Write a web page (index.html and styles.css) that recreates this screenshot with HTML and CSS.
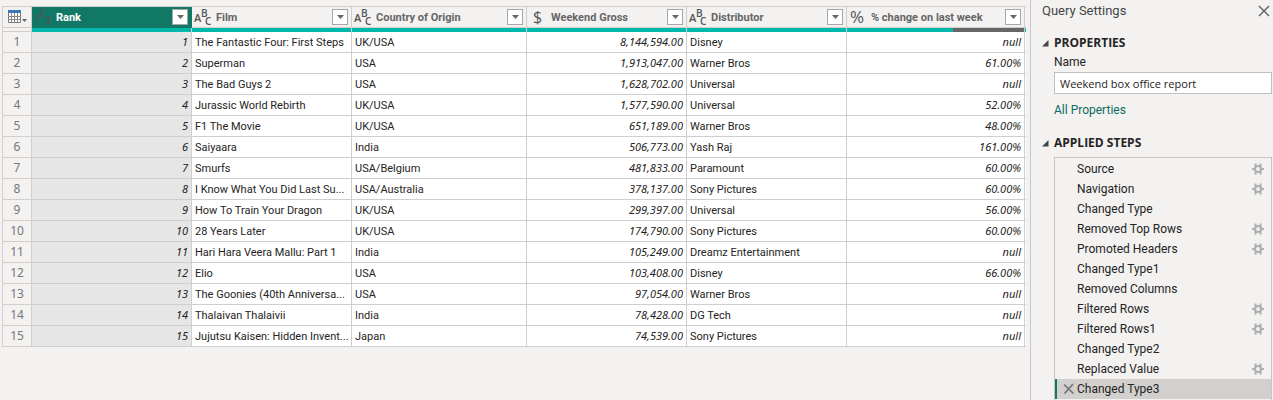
FILE: index.html
```html
<!DOCTYPE html>
<html lang="en">
<head>
<meta charset="utf-8">
<title>Weekend box office report</title>
<link rel="stylesheet" href="styles.css">
</head>
<body>
<svg class="defs" aria-hidden="true">
  <symbol id="arrow" viewBox="0 0 7 4"><path d="M0 0h7L3.5 4z" fill="#666"/></symbol>
  <symbol id="gear" viewBox="0 0 12 12"><g fill="none" stroke="#b0b0b0"><circle cx="6" cy="6" r="3" stroke-width="2.200"/><path stroke-width="2" d="M0 6h3M9 6h3M3.500 .5V4M8.500 .5V4M3.500 8v3.500M8.500 8v3.500"/></g></symbol>
</svg>
<div class="app">
<main class="preview">
<table class="grid">
<colgroup><col class="w-num"><col class="w-std"><col class="w-std"><col class="w-wide"><col class="w-std"><col class="w-std"><col class="w-pct"><col class="w-end"></colgroup>
<thead>
<tr class="heads">
<td class="corner"><button class="table-menu" aria-label="Table options"><svg width="21" height="14" viewBox="0 0 21 14"><path d="M.5.5h12v12H.5z" fill="#fff" stroke="#777"/><path d="M0 0h13v3H0z" fill="#3b78b5"/><path d="M3.500 3v10M6.500 3v10M9.500 3v10M0 6.500h13M0 9.500h13" stroke="#888" fill="none"/><path d="M14 9h5l-2.500 3z" fill="#666"/></svg></button></td>
<th class="selected" scope="col"><div class="head"><svg class="type heavy"><text x="0" y="14" font-size="11">1</text><text x="5" y="9" font-size="10">2</text><text x="11" y="16" font-size="10">3</text></svg><span class="label">Rank</span><button class="drop" aria-label="Filter Rank"><svg><use href="#arrow"/></svg></button></div></th>
<th scope="col"><div class="head"><svg class="type heavy"><text x="0" y="14" font-size="11">A</text><text x="7" y="9" font-size="10">B</text><text x="11" y="17" font-size="10">C</text></svg><span class="label">Film</span><button class="drop" aria-label="Filter Film"><svg><use href="#arrow"/></svg></button></div></th>
<th scope="col"><div class="head"><svg class="type heavy"><text x="0" y="14" font-size="11">A</text><text x="7" y="9" font-size="10">B</text><text x="11" y="17" font-size="10">C</text></svg><span class="label">Country of Origin</span><button class="drop" aria-label="Filter Country of Origin"><svg><use href="#arrow"/></svg></button></div></th>
<th scope="col"><div class="head"><svg class="type"><text x="4" y="15" font-size="16">$</text></svg><span class="label">Weekend Gross</span><button class="drop" aria-label="Filter Weekend Gross"><svg><use href="#arrow"/></svg></button></div></th>
<th scope="col"><div class="head"><svg class="type heavy"><text x="0" y="14" font-size="11">A</text><text x="7" y="9" font-size="10">B</text><text x="11" y="17" font-size="10">C</text></svg><span class="label">Distributor</span><button class="drop" aria-label="Filter Distributor"><svg><use href="#arrow"/></svg></button></div></th>
<th scope="col"><div class="head"><svg class="type"><text x="1" y="15" font-size="17">%</text></svg><span class="label">% change on last week</span><button class="drop" aria-label="Filter % change on last week"><svg><use href="#arrow"/></svg></button></div></th>
<td class="end"></td>
</tr>
<tr class="quality"><td class="corner"></td><td></td><td></td><td></td><td></td><td></td><td class="partial"></td><td class="end"></td></tr>
</thead>
<tbody>
<tr><th scope="row">1</th><td class="n sel">1</td><td>The Fantastic Four: First Steps</td><td>UK/USA</td><td class="n">8,144,594.00</td><td>Disney</td><td class="n">null</td><td class="end"></td></tr>
<tr><th scope="row">2</th><td class="n sel">2</td><td>Superman</td><td>USA</td><td class="n">1,913,047.00</td><td>Warner Bros</td><td class="n">61.00%</td><td class="end"></td></tr>
<tr><th scope="row">3</th><td class="n sel">3</td><td>The Bad Guys 2</td><td>USA</td><td class="n">1,628,702.00</td><td>Universal</td><td class="n">null</td><td class="end"></td></tr>
<tr><th scope="row">4</th><td class="n sel">4</td><td>Jurassic World Rebirth</td><td>UK/USA</td><td class="n">1,577,590.00</td><td>Universal</td><td class="n">52.00%</td><td class="end"></td></tr>
<tr><th scope="row">5</th><td class="n sel">5</td><td>F1 The Movie</td><td>UK/USA</td><td class="n">651,189.00</td><td>Warner Bros</td><td class="n">48.00%</td><td class="end"></td></tr>
<tr><th scope="row">6</th><td class="n sel">6</td><td>Saiyaara</td><td>India</td><td class="n">506,773.00</td><td>Yash Raj</td><td class="n">161.00%</td><td class="end"></td></tr>
<tr><th scope="row">7</th><td class="n sel">7</td><td>Smurfs</td><td>USA/Belgium</td><td class="n">481,833.00</td><td>Paramount</td><td class="n">60.00%</td><td class="end"></td></tr>
<tr><th scope="row">8</th><td class="n sel">8</td><td>I Know What You Did Last Su...</td><td>USA/Australia</td><td class="n">378,137.00</td><td>Sony Pictures</td><td class="n">60.00%</td><td class="end"></td></tr>
<tr><th scope="row">9</th><td class="n sel">9</td><td>How To Train Your Dragon</td><td>UK/USA</td><td class="n">299,397.00</td><td>Universal</td><td class="n">56.00%</td><td class="end"></td></tr>
<tr><th scope="row">10</th><td class="n sel">10</td><td>28 Years Later</td><td>UK/USA</td><td class="n">174,790.00</td><td>Sony Pictures</td><td class="n">60.00%</td><td class="end"></td></tr>
<tr><th scope="row">11</th><td class="n sel">11</td><td>Hari Hara Veera Mallu: Part 1</td><td>India</td><td class="n">105,249.00</td><td>Dreamz Entertainment</td><td class="n">null</td><td class="end"></td></tr>
<tr><th scope="row">12</th><td class="n sel">12</td><td>Elio</td><td>USA</td><td class="n">103,408.00</td><td>Disney</td><td class="n">66.00%</td><td class="end"></td></tr>
<tr><th scope="row">13</th><td class="n sel">13</td><td>The Goonies (40th Anniversa...</td><td>USA</td><td class="n">97,054.00</td><td>Warner Bros</td><td class="n">null</td><td class="end"></td></tr>
<tr><th scope="row">14</th><td class="n sel">14</td><td>Thalaivan Thalaivii</td><td>India</td><td class="n">78,428.00</td><td>DG Tech</td><td class="n">null</td><td class="end"></td></tr>
<tr><th scope="row">15</th><td class="n sel">15</td><td>Jujutsu Kaisen: Hidden Invent...</td><td>Japan</td><td class="n">74,539.00</td><td>Sony Pictures</td><td class="n">null</td><td class="end"></td></tr>
</tbody>
</table>
</main>
<aside class="settings">
<header class="title-row"><h1>Query Settings</h1><button class="close" aria-label="Close"><svg width="12" height="12" viewBox="0 0 12 12"><path d="M1 1l10 10M11 1 1 11" stroke="#555" stroke-width="1.2"/></svg></button></header>
<section class="properties">
<h2><svg class="fold" viewBox="0 0 7 7"><path d="M6.500 0v6.500H0z" fill="#444"/></svg>PROPERTIES</h2>
<label for="query-name">Name</label>
<input id="query-name" type="text" value="Weekend box office report">
<a href="#">All Properties</a>
</section>
<section class="applied">
<h2><svg class="fold" viewBox="0 0 7 7"><path d="M6.500 0v6.500H0z" fill="#444"/></svg>APPLIED STEPS</h2>
<ul class="steps">
<li><span>Source</span><button aria-label="Edit Source"><svg><use href="#gear"/></svg></button></li>
<li><span>Navigation</span><button aria-label="Edit Navigation"><svg><use href="#gear"/></svg></button></li>
<li><span>Changed Type</span></li>
<li><span>Removed Top Rows</span><button aria-label="Edit Removed Top Rows"><svg><use href="#gear"/></svg></button></li>
<li><span>Promoted Headers</span><button aria-label="Edit Promoted Headers"><svg><use href="#gear"/></svg></button></li>
<li><span>Changed Type1</span></li>
<li><span>Removed Columns</span></li>
<li><span>Filtered Rows</span><button aria-label="Edit Filtered Rows"><svg><use href="#gear"/></svg></button></li>
<li><span>Filtered Rows1</span><button aria-label="Edit Filtered Rows1"><svg><use href="#gear"/></svg></button></li>
<li><span>Changed Type2</span></li>
<li><span>Replaced Value</span><button aria-label="Edit Replaced Value"><svg><use href="#gear"/></svg></button></li>
<li class="current"><button class="remove" aria-label="Delete Changed Type3"><svg viewBox="0 0 12 12"><path d="M1 1.500 10.500 10.500M10 1 1.500 10.500" stroke="#737373" stroke-width="1.700" fill="none"/></svg></button><span>Changed Type3</span></li>
</ul>
</section>
</aside>
</div>
</body>
</html>
```
FILE: styles.css
```css
* { box-sizing: border-box; }
body {
  margin: 0;
  background: #f3f2f1;
  color: #252423;
  font: 11px/20px Roboto, "Open Sans", sans-serif;
}
button { padding: 0; border: 0; background: none; display: flex; align-items: center; justify-content: center; }
h1, h2, ul { margin: 0; padding: 0; }
.defs { position: absolute; width: 0; height: 0; }
.app { display: flex; height: 100vh; overflow: hidden; }
.preview { flex: 1; min-width: 0; padding: 6px 0 0 2px; overflow: hidden; }

.grid { table-layout: fixed; width: 1024px; border-collapse: separate; border-spacing: 0; border: solid #d0cfce; border-width: 1px 0 0 1px; }
.w-num { width: 29px; }
.w-std { width: 160px; }
.w-wide { width: 175px; }
.w-pct { width: 178px; }
.w-end { width: 1px; }
.grid td, .grid th { padding: 0 3px; height: 21px; border: solid #d0cfce; border-width: 0 1px 1px 0; white-space: nowrap; }
.grid tbody td { padding-top: 1px; line-height: 19px; background: #fff; }
.grid tbody th { padding: 0; background: #f3f2f1; color: #777; font: 12px/20px "Noto Sans", sans-serif; text-align: center; }
.grid tbody .n { padding: 0 3px; line-height: 20px; text-align: right; font-family: "Noto Sans", sans-serif; font-style: italic; }
.grid tbody .sel { background: #e6e6e6; }
.grid tbody .end { padding: 0; }
.grid .end { padding: 0; border-right: 0; }
.grid .corner { padding: 0 0 0 5px; }
.heads th { color: #666; font-size: 11px; font-weight: 700; text-align: left; }
.grid .heads th { padding: 0 3px 0 2px; }
.grid .heads .selected { background: #117865; color: #fff; border-color: #117865; }
.head { display: flex; align-items: center; height: 20px; }
.label { flex: 1; margin-left: 4px; padding-top: 1px; }
.type { width: 18px; height: 18px; overflow: visible; fill: #555; font-family: "Open Sans", sans-serif; font-weight: 400; }
.heavy { font-weight: 600; }
.drop { width: 16px; height: 16px; border: 1px solid #a6a6a6; background: #fff; }
.drop svg { width: 7px; height: 4px; }
.grid .quality td { height: 4px; line-height: 0; padding: 0; background: #01b8aa; border-bottom: 0; }
.grid .quality .corner { background: #f3f2f1; border-bottom: 1px solid #d0cfce; }
.grid .quality .partial { background: linear-gradient(90deg, #01b8aa 60%, #666 60%); }

.settings { flex: 0 0 243px; padding: 0 1px 0 11px; border-left: 1px solid #c8c8c8; display: flex; flex-direction: column; font-size: 12px; }
.title-row { display: flex; justify-content: space-between; align-items: center; padding-right: 1px; margin-bottom: 12px; }
h1 { padding-top: 1px; font-size: 13px; font-weight: 400; color: #444; }
.close { width: 14px; height: 20px; }
h2 { display: flex; align-items: center; margin-left: -12px; font: 700 12px/20px "Open Sans", sans-serif; }
.fold { width: 7px; height: 7px; margin-right: 5px; }
.properties, .applied { padding-left: 12px; display: flex; flex-direction: column; }
.properties { align-items: stretch; margin-bottom: 13px; }
.properties label { line-height: 19px; }
.properties input { height: 22px; padding: 0 5px; border: 1px solid #c0c0c0; background: #fff; color: #252423; font: 11px "Open Sans", sans-serif; margin-bottom: 6px; }
.properties a { color: #0f6b5c; text-decoration: none; align-self: flex-start; }
.applied { flex: 1; }
.steps { list-style: none; margin-top: 4px; flex: 1 0 auto; padding: 1px 0; border: 1px solid #c8c6c4; }
.steps li { display: flex; align-items: center; height: 20px; padding: 0 7px 0 22px; }
.steps span { flex: 1; }
.steps svg { width: 12px; height: 12px; }
.steps .current { background: #d2d0ce; border-left: 2px solid #117865; padding-left: 4px; }
.remove { width: 16px; }
```
